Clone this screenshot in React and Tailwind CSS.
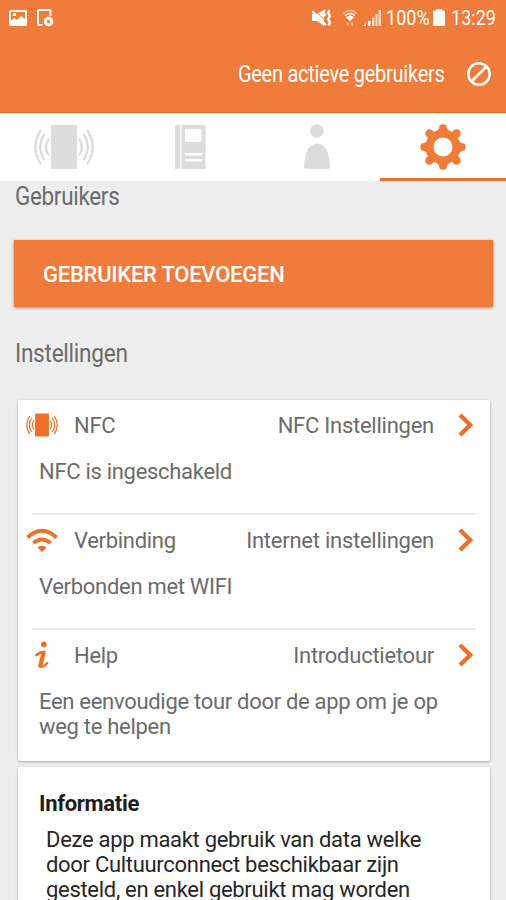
import React from 'react';

const NfcIcon = ({ className }) => (
  <svg viewBox="0 0 60 46" className={className} fill="none" stroke="currentColor" strokeWidth="2.3" preserveAspectRatio="none">
    <rect x="17" y="1" width="26" height="44" fill="currentColor" stroke="none" />
    <path d="M15 14.5Q9 23 15 31.5M10.500 10Q2 23 10.500 36M7 6Q-4.500 23 7 40.500" />
    <path d="M45 14.5Q51 23 45 31.5M49.500 10Q58 23 49.500 36M53 6Q64.500 23 53 40.500" />
  </svg>
);

const WifiIcon = () => (
  <svg viewBox="0 0 32 24" className="h-6 w-8" fill="none" stroke="#ee7026" strokeWidth="3.800">
    <path d="M1.500 9.500Q16 -4 30.500 9.500" />
    <path d="M7.300 15Q16 8 24.700 15" />
    <path d="M11.300 19.500Q16 16 20.700 19.500L16 24Z" fill="#ee7026" stroke="none" />
  </svg>
);

const InfoIcon = () => (
  <svg viewBox="0 0 14 28" className="h-7 w-3.5" fill="none" stroke="#ee7026" strokeLinecap="round">
    <circle cx="8.800" cy="3.300" r="2.900" fill="#ee7026" stroke="none" />
    <path d="M1.500 14Q5 10.800 9.300 11" strokeWidth="2.600" />
    <path d="M8.500 12L5.300 24.500" strokeWidth="4.200" />
    <path d="M5.300 26Q9.500 25.500 12.300 22" strokeWidth="2.200" />
  </svg>
);

const Chevron = () => (
  <svg viewBox="0 0 16 24" className="h-6 w-4" fill="none" stroke="#ee7026" strokeWidth="4.300">
    <path d="M2 2L12.200 12L2 22" />
  </svg>
);

const rows = [
  { icon: <NfcIcon className="h-6 w-8 text-[#ee7026]" />, title: 'NFC', link: 'NFC Instellingen', text: ['NFC is ingeschakeld'] },
  { icon: <WifiIcon />, title: 'Verbinding', link: 'Internet instellingen', text: ['Verbonden met WIFI'] },
  { icon: <InfoIcon />, title: 'Help', link: 'Introductietour', text: ['Een eenvoudige tour door de app om je op', 'weg te helpen'] },
];

const App = () => {
  return (
    <div className="h-[900px] w-[506px] overflow-hidden bg-[#eeeeee] font-['Roboto',sans-serif] text-[22px] leading-[25px] tracking-[-0.3px] text-[#6b6b6b]">
      {/* Status bar */}
      <div className="h-[113px] border-b border-[#e56a1c] bg-[#ef7c3b] text-white">
        <div className="flex h-9 items-center pr-[9px] pl-[9px] tracking-normal">
          <svg viewBox="0 0 18 18" className="h-[18px] w-[18px]">
            <path fillRule="evenodd" fill="#fff" d="M2 1H16Q18 1 18 3V15Q18 17 16 17H2Q0 17 0 15V3Q0 1 2 1ZM2 3V12L5 9L8 11L12 7L16 10V3ZM4 4H7V7H4Z" />
          </svg>
          <svg viewBox="0 0 17 18" className="ml-[10px] h-[18px] w-[17px]" fill="none" stroke="#fff" strokeWidth="2">
            <path d="M5.500 16H2Q1 16 1 15V2Q1 1 2 1H12.500Q13.500 1 13.500 2V7" />
            <circle cx="11.500" cy="12.500" r="3.300" strokeWidth="3" />
          </svg>
          <div className="ml-auto flex items-center">
            <svg viewBox="0 0 20 18" className="h-[18px] w-5" fill="none" stroke="#fff" strokeWidth="2">
              <path fill="#fff" stroke="none" d="M0 5H5L12 1V17L5 12H0Z" />
              <path d="M0 2L14 16" strokeWidth="2" />
              <path d="M3.500 2L13 11.500" stroke="#ef7c3b" strokeWidth="1" />
              <path d="M12.500 1L11.500 4L13.500 7M17.500 1L16 4L18 7L16 10L18 13L16.500 16.500" strokeWidth="2.300" />
            </svg>
            <svg viewBox="0 0 16 18" className="ml-[10px] h-[18px] w-4" fill="none" stroke="#fff" strokeWidth="1.500">
              <path d="M1 4.500Q8 -1.500 15 4.500" strokeOpacity=".5" />
              <path d="M3 6.500Q8 2.500 13 6.500" />
              <path d="M4 8Q8 5 12 8L8 12.500Z" fill="#fff" stroke="none" />
              <path d="M5.500 13.500V16.500M10 13.500V16.500" strokeWidth="2" strokeOpacity=".5" />
            </svg>
            <svg viewBox="0 0 18 18" className="ml-[5px] h-[18px] w-[18px]" fill="#fff">
              <path d="M0 17L3 14V17ZM5 12H7.500V17H5Z" />
              <path d="M9 8.500H11.500V17H9ZM12.500 5H14.500V17H12.500ZM15.500 1H18V17H15.500Z" opacity=".7" />
            </svg>
            <span className="ml-[5px] w-[44px] text-[21px] whitespace-nowrap"><span className="inline-block origin-left scale-x-[0.86]">100%</span></span>
            <svg viewBox="0 0 12 18" className="ml-[3px] h-[18px] w-3" fill="#fff">
              <path d="M3 0H9V1.500H11Q12 1.500 12 2.500V16Q12 17 11 17H1Q0 17 0 16V2.500Q0 1.500 1 1.500H3Z" />
            </svg>
            <span className="ml-[6px] w-[46px] text-[21px] whitespace-nowrap"><span className="inline-block origin-left scale-x-[0.86]">13:29</span></span>
          </div>
        </div>
        <div className="flex h-[76px] items-center justify-end pr-[15px]">
          <span className="origin-right scale-x-[0.87] pt-px text-[23px]">Geen actieve gebruikers</span>
          <svg viewBox="0 0 24 24" className="ml-[22px] h-6 w-6" fill="none" stroke="#fff" strokeWidth="2.500">
            <circle cx="12" cy="12" r="10.700" />
            <path d="M4.500 19.500L19.500 4.500" />
          </svg>
        </div>
      </div>

      {/* Tabs */}
      <div className="grid h-[68px] grid-cols-[127px_127px_126px_126px] bg-white text-[#dcdcdc]">
        <div className="flex items-center justify-center">
          <NfcIcon className="h-[46px] w-[60px]" />
        </div>
        <div className="flex items-center justify-center">
          <svg viewBox="0 0 32 46" className="mr-[1px] h-[46px] w-8" fill="currentColor">
            <rect x="1" y="1" width="5" height="44" />
            <path fillRule="evenodd" d="M7.500 1H31.500V45H7.500ZM12 5H26.500Q27.500 5 27.500 6V17Q27.500 18 26.500 18H12Q11 18 11 17V6Q11 5 12 5ZM11 29V31.500H28V29ZM11 35V37.500H28V35Z" />
          </svg>
        </div>
        <div className="flex items-center justify-center">
          <svg viewBox="0 0 26 46" className="h-[46px] w-[26px]" fill="currentColor">
            <circle cx="12.800" cy="7" r="6.800" />
            <path d="M0 43Q1 20 13 19.500Q25 20 26 43Q26 45 24 45H2Q0 45 0 43Z" />
          </svg>
        </div>
        <div className="flex items-center justify-center border-b-[3px] border-[#e8752f]">
          <svg viewBox="-23 -23 46 46" className="mt-[3px] h-[46px] w-[46px]" fill="none" stroke="#ee7b38">
            <circle r="13.500" strokeWidth="8" />
            <path d="M-6.500 -16Q-3.500 -17.500 -3.500 -21.500Q0 -24 3.500 -21.500Q3.500 -17.500 6.500 -16M-6.500 16Q-3.500 17.500 -3.500 21.500Q0 24 3.500 21.500Q3.500 17.500 6.500 16M-16 -6.500Q-17.500 -3.500 -21.500 -3.500Q-24 0 -21.500 3.500Q-17.500 3.500 -16 6.500M16 -6.500Q17.500 -3.500 21.500 -3.500Q24 0 21.500 3.500Q17.500 3.500 16 6.500" fill="#ee7b38" stroke="none" />
            <path d="M-11 -11L-13.500 -13.500M11 -11L13.500 -13.500M-11 11L-13.500 13.500M11 11L13.500 13.500" strokeWidth="8.500" strokeLinecap="round" />
          </svg>
        </div>
      </div>

      <h2 className="ml-[15px] h-[59px] pt-[3px] text-[25px]"><span className="inline-block origin-left scale-x-[0.895]">Gebruikers</span></h2>
      <button className="mx-[14px] flex h-[67px] w-[479px] items-center bg-[#ef7c3b] pt-[2px] pl-[29px] font-medium tracking-[-0.25px] text-white shadow-[0_1px_3px_rgba(0,0,0,0.4)]">
        GEBRUIKER TOEVOEGEN
      </button>
      <h2 className="ml-[15px] h-[93px] pt-[34px] text-[25px]"><span className="inline-block origin-left scale-x-[0.905]">Instellingen</span></h2>

      {/* Settings */}
      <div className="mx-[18px] h-[361px] w-[472px] rounded-[2px] bg-white shadow-[0_1px_3px_rgba(0,0,0,0.3)]">
        {rows.map((row, index) => (
          <div key={index} className="h-[115px]">
            <div className="flex h-[50px] items-center pr-[16px] pl-2">
              <div className="flex w-8 justify-center">{row.icon}</div>
              <span className="ml-4">{row.title}</span>
              <span className="mr-[24px] ml-auto tracking-[-0.25px]">{row.link}</span>
              <Chevron />
            </div>
            <div className="h-[63px] pt-[9px] pl-[21px]">
              {row.text.map((line) => (
                <p key={line} className="whitespace-nowrap">{line}</p>
              ))}
            </div>
            {index < 2 && <div className="mr-[14px] ml-[14px] h-[2px] bg-[#e9e9e9]" />}
          </div>
        ))}
      </div>

      <div className="mx-[18px] mt-[6px] h-[160px] w-[472px] rounded-[2px] bg-white pt-[24px] pl-[21px] text-[#262626] shadow-[0_1px_3px_rgba(0,0,0,0.3)]">
        <h3 className="font-bold text-[#1c1c1c]">Informatie</h3>
        <div className="mt-[11px] ml-[7px] whitespace-nowrap">
          <p>Deze app maakt gebruik van data welke</p>
          <p>door Cultuurconnect beschikbaar zijn</p>
          <p>gesteld, en enkel gebruikt mag worden</p>
        </div>
      </div>
    </div>
  );
};

export default App;
